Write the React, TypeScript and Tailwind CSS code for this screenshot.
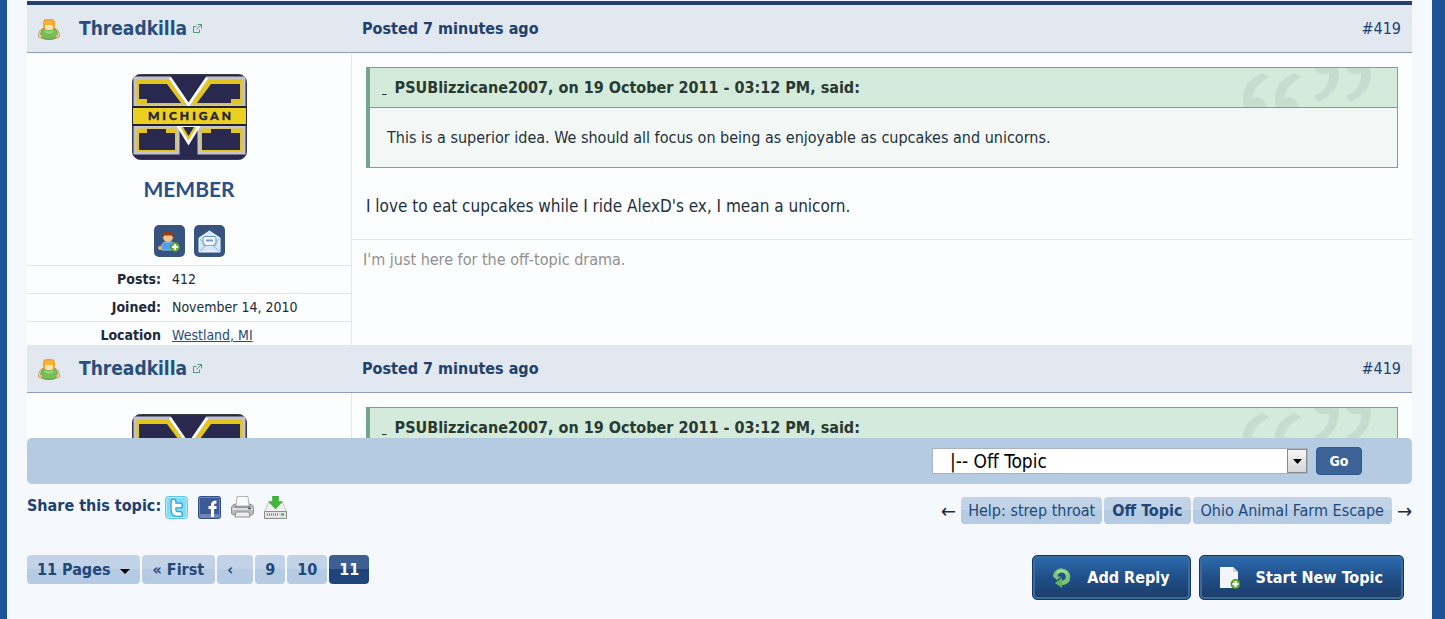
import { ReactNode } from 'react';
import { clsx } from 'clsx';

const pages = ['9', '10', '11'];

const details = [
  { label: 'Posts:', value: '412' },
  { label: 'Joined:', value: 'November 14, 2010' },
  { label: 'Location', value: 'Westland, MI', href: '#location' },
];

const chip =
  'rounded bg-gradient-to-b from-[#c3d3e7] from-50% to-[#b5cbe3] to-50% text-[#22487a]';

function UserIcon() {
  return (
    <svg className="w-[22px] h-[22px]" viewBox="0 0 22 22" aria-hidden="true">
      <path d="M.500 18c0-4 2-7 5-8h11c3 1 5 4 5 8 0 2-2 2-3 2-4 2-11 2-15 0-1 0-3 0-3-2Z" fill="#fde9cd" stroke="#c79a63" strokeWidth="1" />
      <path d="M3 19c-1-5 1-8 4-9h8c3 1 5 4 4 9-4 3-12 3-16 0Z" fill="#78bd58" stroke="#559f42" />
      <circle cx="2.500" cy="18" r="1.500" fill="#f4bd83" />
      <circle cx="19.500" cy="18" r="1.500" fill="#f4bd83" />
      <path d="M7 13c2 2 6 2 8 0" fill="none" stroke="#9bd67c" strokeWidth="2" />
      <rect x="5" y="1" width="12" height="11" rx="4" fill="#f4a321" />
      <rect x="7" y="5" width="8" height="7" rx="3" fill="#fde3ba" />
      <path d="M6 5c1-4 9-4 10 0l-1 2H7Z" fill="#f9b233" />
    </svg>
  );
}

function PopupIcon() {
  return (
    <svg className="w-[9px] h-[9px]" viewBox="0 0 9 9" fill="none" stroke="#4d9a74" aria-hidden="true">
      <path d="M3.500 2.500h-3v6h6v-3M4.500.5h4v4M8.500.5l-5 5" />
    </svg>
  );
}

function TeamBadge({ wordmark }: { wordmark: boolean }) {
  return (
    <svg className="w-[115px] h-[86px]" viewBox="0 0 115 86" role="img" aria-label="Michigan">
      <rect x=".5" y=".5" width="114" height="85" rx="8" fill="#29284f" stroke="#3a3947" />
      {/* upper half of the M */}
      <path d="M3 4H38L56.500 31 75 4H112V32H3Z" fill="#e3c51c" stroke="#c3c3cd" strokeWidth="3" />
      <path d="M38 4 56.500 31 75 4" fill="none" stroke="#fff" strokeWidth="2.500" />
      <path d="M7 10H35L49 29H15V25H7Z" fill="#29284f" />
      <path d="M108 10H79L65 29H99V25H108Z" fill="#29284f" />
      {/* lower half of the M */}
      <path d="M3 53H46V79H3ZM67 53H112V79H67Z" fill="#e3c51c" stroke="#c3c3cd" strokeWidth="3" />
      <path d="M46 52 56.500 69 67 52Z" fill="#e3c51c" stroke="#fff" strokeWidth="2.500" />
      <path d="M51 53 56.500 62 62 53Z" fill="#29284f" />
      <path d="M7 59H15V55H34V59H43V76H7Z" fill="#29284f" />
      <path d="M70 59H79V55H99V59H108V76H70Z" fill="#29284f" />
      <rect x="0" y="32" width="115" height="20" fill="#22213a" />
      <rect x="1" y="34" width="113" height="16" fill="#ecd021" />
      {wordmark && (
        <text
          x="59"
          y="46"
          textAnchor="middle"
          fill="#26233a"
          stroke="#26233a"
          strokeWidth=".4"
          className="font-['Lato',sans-serif] text-[12px] font-black tracking-[3px]"
        >
          MICHIGAN
        </text>
      )}
    </svg>
  );
}

function AddFriendIcon() {
  return (
    <svg className="w-[22px] h-[22px]" viewBox="0 0 22 22" aria-hidden="true">
      <path d="M3 19c0-4 2-7 5-7h5c3 0 5 3 4 8H4Z" fill="#4f9fea" stroke="#8cc6f8" />
      <circle cx="2" cy="18" r="2" fill="#f0ab62" />
      <circle cx="10" cy="7" r="5" fill="#f6c28a" />
      <path d="M4.500 8C4 3 6 1 10 1s6 2 5.500 7l-2-2.500h-7Z" fill="#8a3f16" />
      <circle cx="17" cy="17" r="4.500" fill="#6db33f" stroke="#4d8f2a" />
      <path d="M17 14v6M14 17h6" stroke="#fff" strokeWidth="2" />
    </svg>
  );
}

function MailIcon() {
  return (
    <svg className="w-[23px] h-[23px]" viewBox="0 0 23 23" aria-hidden="true">
      <path d="M1 8 11.500 1 22 8V22H1Z" fill="#d5e8fb" stroke="#f2f9ff" />
      <rect x="5" y="6.500" width="13" height="9" rx="2" fill="#f4faff" stroke="#5b8fc9" />
      <path d="M8 10.500h7" stroke="#6b9fd6" strokeWidth="2" />
      <path d="M1.500 21.500 8 15.500h7l6.500 6M2 9l6 6.500M21 9l-6 6.500" fill="none" stroke="#88b1dd" />
    </svg>
  );
}

function TwitterIcon() {
  return (
    <svg className="w-[23px] h-[23px]" viewBox="0 0 23 23" aria-hidden="true">
      <rect x=".5" y=".5" width="22" height="22" rx="3" fill="#7fdcf8" stroke="#5cc8ee" />
      <rect x="1.500" y="1.500" width="20" height="20" rx="2" fill="none" stroke="#b4ecfc" />
      <path d="M8.500 5.500v8.500c0 3 1.500 4 4 4H15M8.500 9.500H15" fill="none" stroke="#2fa3d8" strokeWidth="6" strokeLinecap="round" />
      <path d="M8.500 5.500v8.500c0 3 1.500 4 4 4H15M8.500 9.500H15" fill="none" stroke="#fff" strokeWidth="3.500" strokeLinecap="round" />
    </svg>
  );
}

function FacebookIcon() {
  return (
    <svg className="w-[23px] h-[23px]" viewBox="0 0 23 23" aria-hidden="true">
      <rect x=".5" y=".5" width="22" height="22" rx="2" fill="#3d5a98" stroke="#33508c" />
      <rect x="1.500" y="1.500" width="20" height="20" rx="1" fill="none" stroke="#7087b8" />
      <path d="M2 18h19v3H2Z" fill="#6d84b5" />
      <path d="M14.500 21V9c0-2 1-3 4-3M10.500 11.500h8" fill="none" stroke="#fff" strokeWidth="3.200" />
    </svg>
  );
}

function PrinterIcon() {
  return (
    <svg className="w-[23px] h-[23px]" viewBox="0 0 23 23" aria-hidden="true">
      <path d="M.5 12c0-2 2-4 4-4h14c2 0 4 2 4 4v5c0 1-1 2-2 2h-18c-1 0-2-1-2-2Z" fill="#b9babc" stroke="#8f8f91" />
      <path d="M4 10.500h15" stroke="#77787b" strokeWidth="2" />
      <path d="M5 10 6 .5h11L18 10Z" fill="#fbfbfb" stroke="#b5b5b5" />
      <path d="M1 13h21" stroke="#e9e9e9" strokeWidth="1.500" />
      <path d="M17 12.500h3" stroke="#555" strokeWidth="1.500" />
      <path d="M5 16h13l1 5H4Z" fill="#eee" stroke="#8f8f91" />
    </svg>
  );
}

function DownloadIcon() {
  return (
    <svg className="w-[23px] h-[23px]" viewBox="0 0 23 23" aria-hidden="true">
      <path d="M4 7h15l3.500 9H.5Z" fill="#f1f1f1" stroke="#c4c4c4" />
      <path d="M.5 15.500h22v7H.5Z" fill="#e4e4e4" stroke="#8d8d8d" />
      <path d="M3 18.500h12" stroke="#777" strokeWidth="2" strokeDasharray="1 1" />
      <path d="M17 18.500h3" stroke="#35b92c" strokeWidth="2" />
      <path d="M8.500 0h6v5.500h4L11.500 13l-7-7.500h4Z" fill="#3fb636" stroke="#309a2a" strokeWidth=".5" />
    </svg>
  );
}

function ReplyIcon() {
  return (
    <svg className="w-[18px] h-[20px]" viewBox="0 0 18 20" aria-hidden="true">
      <path d="M2 9C3 0 15 1 15 9c0 5-4 6-8 6" fill="none" stroke="#7cc576" strokeWidth="4.500" />
      <path d="M0 8.500h8L4 12Z" fill="#7cc576" />
      <path d="M9 9.500V20l-7-5Z" fill="#5fb45a" />
      <path d="M4 5c3-3 8-3 10 1" fill="none" stroke="#b0e0a6" strokeWidth="1.500" />
    </svg>
  );
}

function NewTopicIcon() {
  return (
    <svg className="w-[20px] h-[22px]" viewBox="0 0 20 22" aria-hidden="true">
      <path d="M0 0h13l5 5v16H0Z" fill="#f3f5f8" />
      <path d="M13 0v5h5Z" fill="#cfd6de" />
      <circle cx="15.500" cy="17" r="4.500" fill="#6db33f" stroke="#3f8a26" />
      <path d="M15.500 14v6M12.500 17h6" stroke="#fff" strokeWidth="2" />
    </svg>
  );
}

// Watermark in the head of a quote
function QuoteOrnament() {
  const opening = 'M26 5C12 10 5 20 6 33l1 7h22c1-7-5-12-14-10C16 21 23 14 32 9Z';
  const closing = 'M77-1h24c4 15-5 29-20 35l-4-6C87 24 93 17 92 5 85 8 78 5 77-1Z';

  return (
    <svg className="absolute right-0 top-0 h-[39px] w-[160px] overflow-hidden" viewBox="0 0 160 39" fill="#c5dccf" aria-hidden="true">
      <path d={opening} />
      <path d={opening} transform="translate(32 0)" />
      <path d={closing} />
      <path d={closing} transform="translate(32 0)" />
    </svg>
  );
}

function Post({ folded = false }: { folded?: boolean }) {
  return (
    <article className={clsx('bg-[#fcfdfe]', folded && 'max-h-[93px] overflow-hidden')}>
      <header className="flex h-12 items-center border-b border-[#8b9dba] bg-[#e1e8ef] text-[#22406d]">
        <h3 className="flex w-[335px] shrink-0 items-center pl-[11px] text-[19px] font-bold text-[#284f7c]">
          <UserIcon />
          <a href="#threadkilla" className="ml-[19px]">Threadkilla</a>
          <a href="#profile" aria-label="Open profile" className="ml-[6px]">
            <PopupIcon />
          </a>
        </h3>
        <p className="grow font-bold">Posted 7 minutes ago</p>
        <a href="#419" className="pr-[11px]">#419</a>
      </header>

      <div className="flex">
        <aside className="w-[325px] shrink-0 border-r border-[#dfe7ef]">
          <div className="flex flex-col items-center pt-[21px]">
            <TeamBadge wordmark={!folded} />
            {!folded && (
              <>
                <p className="mt-[15px] font-['Lato',sans-serif] text-[21px] leading-7 font-bold text-[#2b4f87]">MEMBER</p>
                <div className="mt-[22px] mb-2 flex gap-[9px]">
                  <button aria-label="Add as friend" className="flex h-8 w-[31px] items-center justify-center rounded-[5px] bg-[#36547f]">
                    <AddFriendIcon />
                  </button>
                  <button aria-label="Send message" className="flex h-8 w-[31px] items-center justify-center rounded-[5px] bg-[#36547f]">
                    <MailIcon />
                  </button>
                </div>
              </>
            )}
          </div>
          {!folded && (
            <table className="w-full text-[14px] leading-[19px] text-[#1d2b3a]">
              <tbody>
                {details.map((row) => (
                  <tr key={row.label} className="border-t border-[#dfe7ef] align-top">
                    <th scope="row" className={clsx('w-[134px] pt-1 text-right font-bold', !row.href && 'pb-1')}>
                      {row.label}
                    </th>
                    <td className={clsx('pt-1 pl-[11px]', !row.href && 'pb-1')}>
                      {row.href ? <a href={row.href} className="text-[#284b78] underline">{row.value}</a> : row.value}
                    </td>
                  </tr>
                ))}
              </tbody>
            </table>
          )}
        </aside>

        <div className="grow text-[#1f2f3f]">
          <div className="mx-[14px] mt-[14px]">
            <blockquote className="border border-l-4 border-[#74a48c] bg-[#f3f8f6]">
              <p className="relative h-10 border-b border-[#74a48c] bg-[#d4eadb] pl-3 leading-10 font-bold text-[#283a32]">
                <QuoteOrnament />
                <a href="#snapback" aria-label="View post" className="font-normal underline">&nbsp;</a>
                <span className="ml-2">PSUBlizzicane2007, on 19 October 2011 - 03:12 PM, said:</span>
              </p>
              {!folded && (
                <p className="px-[17px] py-[17px] leading-[25px] text-[#22303c]">
                  This is a superior idea. We should all focus on being as enjoyable as cupcakes and unicorns.
                </p>
              )}
            </blockquote>
            {!folded && (
              <p className="mt-[26px] mb-[21px] text-[17px] leading-6">
                I love to eat cupcakes while I ride AlexD's ex, I mean a unicorn.
              </p>
            )}
          </div>
          {!folded && (
            <p className="border-t border-[#dfe7ef] px-[11px] py-2 leading-6 text-[#8f8f8f]">
              I'm just here for the off-topic drama.
            </p>
          )}
        </div>
      </div>
    </article>
  );
}

function ActionButton({ icon, children }: { icon: ReactNode; children: ReactNode }) {
  return (
    <button className="flex h-[45px] items-center gap-4 rounded-[5px] border border-[#14365f] bg-gradient-to-b from-[#2b6db0] via-[#214f88] to-[#1b3c68] px-5 font-bold text-white shadow-[inset_0_0_0_2px_#3d6a9c]">
      {icon}
      {children}
    </button>
  );
}

export default function App() {
  return (
    <div className="border-l-[7px] border-r-[13px] border-[#1d5297] bg-[#f5f8fd] pt-px pb-[19px] pl-5 pr-5 font-['DejaVu_Sans_Condensed','Noto_Sans',sans-serif] text-[16px]">
      <main>
        <div className="h-1 bg-[#243f6c]" />
        <Post />
        <Post folded />

        {/* Forum jump */}
        <form className="flex h-[46px] items-center justify-end gap-2 rounded-[5px] bg-[#b5cbe2] pr-[50px]">
          <div className="relative w-[376px]">
            <select
              aria-label="Jump to forum"
              className="block h-[26px] w-full appearance-none border border-[#a9b2bd] bg-white pl-[17px] text-[19px] leading-6 text-black"
            >
              <option>|-- Off Topic</option>
            </select>
            <span className="pointer-events-none absolute top-px right-px flex h-6 w-5 items-center justify-center border border-[#8a8a8a] bg-gradient-to-b from-[#f6f6f6] to-[#d6d6d6]">
              <svg className="w-[9px] h-[5px]" viewBox="0 0 9 5"><path d="M0 0h9L4.500 5Z" /></svg>
            </span>
          </div>
          <button type="button" className="h-7 w-[46px] rounded border border-[#2f578c] bg-[#3b6396] text-[14px] font-bold text-white">Go</button>
        </form>

        <div className="mt-3 flex items-start justify-between text-[#22406d]">
          <div className="flex items-start gap-[10px]">
            <p className="-mr-[6px] leading-5 font-bold">Share this topic:</p>
            <a href="#twitter" aria-label="Twitter"><TwitterIcon /></a>
            <a href="#facebook" aria-label="Facebook"><FacebookIcon /></a>
            <a href="#print" aria-label="Print"><PrinterIcon /></a>
            <a href="#download" aria-label="Download"><DownloadIcon /></a>
          </div>
          <nav aria-label="Topics" className="mt-px flex items-center gap-[2px] leading-[27px]">
            <span className="mr-[3px] text-[20px] leading-5 text-[#1d2b3a]">←</span>
            <a href="#previous" className={clsx(chip, 'px-[7px]')}>Help: strep throat</a>
            <a href="#forum" className={clsx(chip, 'px-2 font-bold')}>Off Topic</a>
            <a href="#next" className={clsx(chip, 'px-2')}>Ohio Animal Farm Escape</a>
            <span className="ml-[3px] text-[20px] leading-5 text-[#1d2b3a]">→</span>
          </nav>
        </div>

        <div className="mt-[31px] flex items-start justify-between">
          <nav aria-label="Pages" className="flex gap-[2px] leading-[29px] font-bold">
            <button className={clsx(chip, 'flex items-center gap-[9px] px-[10px]')}>
              11 Pages
              <svg className="mt-1 w-[10px] h-[5px]" viewBox="0 0 10 5"><path d="M0 0h10L5 5Z" /></svg>
            </button>
            <a href="#first" className={clsx(chip, 'px-[11px]')}>« First</a>
            <a href="#prev" className={clsx(chip, 'w-9 pl-[10px]')}>‹</a>
            {pages.map((page) => (
              <a
                key={page}
                href={`#page-${page}`}
                className={
                  page === '11'
                    ? 'rounded bg-gradient-to-b from-[#3d5f92] from-50% to-[#1f447a] to-50% px-[10px] text-white'
                    : clsx(chip, 'px-[10px]')
                }
              >
                {page}
              </a>
            ))}
          </nav>
          <div className="flex gap-2 pr-2">
            <ActionButton icon={<ReplyIcon />}>Add Reply</ActionButton>
            <ActionButton icon={<NewTopicIcon />}>Start New Topic</ActionButton>
          </div>
        </div>
      </main>
    </div>
  );
}
